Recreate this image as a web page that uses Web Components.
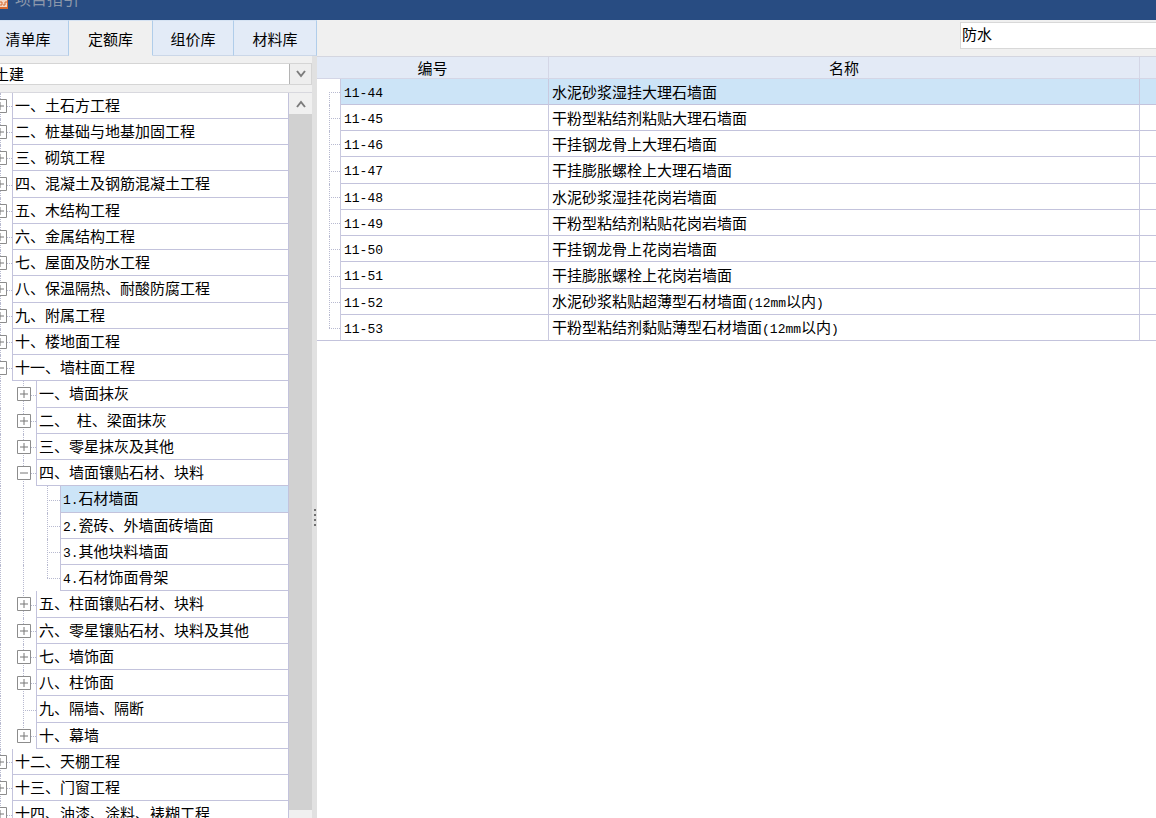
<!DOCTYPE html>
<html lang="zh-CN">
<head>
<meta charset="utf-8">
<title>项目指引</title>
<style>
html, body { margin: 0; height: 100%; overflow: hidden; }
body { font: 15px/20px "Noto Sans CJK SC", sans-serif; color: #000; background: #fff; }
</style>
</head>
<body>
<quota-window></quota-window>
<script>
const define = (name, html, setup) => customElements.define(name, class extends HTMLElement {
  connectedCallback() {
    if (this.shadowRoot) return;
    const root = this.attachShadow({ mode: 'open' });
    const tpl = document.createElement('template');
    tpl.innerHTML = html;
    root.append(tpl.content.cloneNode(true));
    if (setup) setup(this, root);
  }
});

// Half-width characters are set in a smaller monospaced face beside the full-width ones.
const mixed = text => text.replace(/[ -~]+/g, '<half-width>$&</half-width>');

define('half-width', `<style>
:host { display: inline; font: 13px/18px "Liberation Mono", monospace; }
</style><slot></slot>`);

define('title-bar', `<style>
:host { display: flex; height: 20px; background: #284c82; color: #8b97ab; overflow: hidden; font-size: 16px; }
svg { flex: none; width: 8px; height: 20px; margin-right: 7px; }
span { margin-top: -12px; white-space: nowrap; }
</style>
<svg viewBox="0 0 8 20"><path d="M0 0h8v9H0z" fill="#d9692f"/><path d="M0 0h7v7H0z" fill="#f3d9c8"/><path d="M0 2h2v3H0M3 5h2V2h2" stroke="#d9692f" fill="none"/></svg>
<span><slot></slot></span>`);

define('tab-button', `<style>
:host { display: block; }
button { box-sizing: border-box; height: 36px; width: 100%; border: 0; border-right: 1px solid #b0cdea; border-top: 1px solid #d5e2f2; border-bottom: 1px solid #cbd7e8; background: #e3ebf7; font: inherit; color: inherit; padding: 2px 0 0; }
:host([selected]) button { background: #f0f0f0; border-bottom-color: #f0f0f0; }
:host([first]) button { padding-right: 12px; }
</style><button type="button"><slot></slot></button>`);

define('plus-box', `<style>
:host { display: block; width: 14px; height: 14px; }
svg { display: block; }
</style><svg width="14" height="14"><path d="M.5.5h13v13H.5z" fill="#fff" stroke="#8c8c8c"/><path class="h" d="M3 7h8" stroke="#777"/><path class="v" d="M7 3v8" stroke="#777"/></svg>`,
(host, root) => { if (host.hasAttribute('open')) root.querySelector('.v').remove(); });

define('tree-row', `<style>
:host { display: flex; height: 26px; }
:host(:nth-child(4n)) { height: 27px; }
.guide { flex: none; box-sizing: border-box; width: 24px; position: relative; }
.root { width: 12px; }
.guide::before { content: ""; position: absolute; left: 11px; top: 0; bottom: 0; border-left: 1px dotted #b8bad0; }
.root::before { left: 0; }
.last::before { bottom: 50%; }
.branch::after { content: ""; position: absolute; left: 11px; right: 0; top: 50%; border-top: 1px dotted #b8bad0; }
.root.branch::after { left: 0; }
plus-box { position: absolute; z-index: 1; left: 5px; top: 6px; }
.root plus-box { left: -7px; }
.label { flex: 1; box-sizing: border-box; min-width: 0; border-left: 1px solid #c3c3dc; border-bottom: 1px solid #c3c3dc; padding: 2px 0 0 2px; white-space: pre; overflow: hidden; }
:host([selected]) .label { background: #cce4f7; }
</style><div class="label"><slot></slot></div>`,
(host, root) => {
  const level = +host.getAttribute('level'), label = root.querySelector('.label');
  for (let i = 0; i <= level; i++) {
    const g = document.createElement('div');
    g.className = 'guide' + (i ? '' : ' root');
    if (i === level) {
      g.classList.add('branch');
      if (host.hasAttribute('last')) g.classList.add('last');
      const s = host.getAttribute('state');
      if (s !== 'leaf') { const p = document.createElement('plus-box'); if (s === 'open') p.setAttribute('open', ''); g.append(p); }
    }
    label.before(g);
  }
});

define('tree-view', `<style>
:host { display: flex; flex: 1; min-height: 0; overflow: hidden; border-top: 1px solid #d8d8de; background: #fff; }
.rows { flex: 1; min-width: 0; border-right: 1px solid #c3c3dc; }
.bar { width: 23px; display: flex; flex-direction: column; background: #d1d1d1; }
button { height: 21px; border: 0; padding: 0; background: #f0f0f0; }
button.end { height: 8px; }
.thumb { flex: 1; }
svg { display: block; margin: 0 auto; }
</style><div class="rows"></div>
<div class="bar"><button type="button" aria-label="向上滚动"><svg width="12" height="12"><path d="M2 9l4-5 4 5" fill="none" stroke="#7c7c7c" stroke-width="2"/></svg></button><div class="thumb"></div><button class="end" type="button" aria-label="向下滚动"></button></div>`,
(host, root) => {
  const data = [
    [0,'一、土石方工程'],[0,'二、桩基础与地基加固工程'],[0,'三、砌筑工程'],[0,'四、混凝土及钢筋混凝土工程'],[0,'五、木结构工程'],[0,'六、金属结构工程'],[0,'七、屋面及防水工程'],[0,'八、保温隔热、耐酸防腐工程'],[0,'九、附属工程'],[0,'十、楼地面工程'],[0,'十一、墙柱面工程','open'],
    [1,'一、墙面抹灰'],[1,'二、 柱、梁面抹灰'],[1,'三、零星抹灰及其他'],[1,'四、墙面镶贴石材、块料','open'],
    [2,'1.石材墙面','leaf','selected'],[2,'2.瓷砖、外墙面砖墙面','leaf'],[2,'3.其他块料墙面','leaf'],[2,'4.石材饰面骨架','leaf','last'],
    [1,'五、柱面镶贴石材、块料'],[1,'六、零星镶贴石材、块料及其他'],[1,'七、墙饰面'],[1,'八、柱饰面'],[1,'九、隔墙、隔断','leaf'],[1,'十、幕墙','closed','last'],
    [0,'十二、天棚工程'],[0,'十三、门窗工程'],[0,'十四、油漆、涂料、裱糊工程']
  ];
  root.querySelector('.rows').append(...data.map(([level, text, state = 'closed', flag]) => {
    const r = document.createElement('tree-row');
    r.setAttribute('level', level); r.setAttribute('state', state);
    if (flag) r.setAttribute(flag, '');
    r.innerHTML = mixed(text);
    return r;
  }));
});

define('library-select', `<style>
:host { display: grid; grid-template-columns: 1fr 22px; height: 22px; margin: 7px 0; border: 1px solid #d5d5d5; border-left: 0; box-sizing: border-box; background: #fff; overflow: hidden; }
select { grid-area: 1 / 1 / 2 / 3; appearance: none; border: 0; margin: 0 0 0 -6px; padding: 0; background: none; font: inherit; color: inherit; outline: 0; }
.arrow { grid-area: 1 / 2; background: #eee; border-left: 1px solid #b4b4b4; pointer-events: none; display: grid; place-items: center; }
</style><select aria-label="专业"><option>土建</option></select>
<div class="arrow"><svg width="12" height="12"><path d="M2 3l4 5 4-5" fill="none" stroke="#7c7c7c" stroke-width="2"/></svg></div>`);

define('search-box', `<style>
:host { display: block; }
input { box-sizing: border-box; display: block; width: 100%; height: 27px; margin-top: 2px; border: 1px solid #d8d8d8; border-right: 0; border-radius: 0; padding: 0 0 4px 1px; font: inherit; color: inherit; background: #fff; outline: 0; }
</style><input type="text" value="防水" aria-label="搜索">`);

define('quota-table', `<style>
:host { display: block; min-width: 0; overflow: hidden; background: #fff; }
table { width: 100%; table-layout: fixed; border-collapse: separate; border-spacing: 0; }
col.tree { width: 24px; } col.code { width: 208px; } col.more { width: 16px; }
th, td { box-sizing: border-box; padding: 0 0 0 3px; border-right: 1px solid #c9c9df; border-bottom: 1px solid #c3c3dc; font-weight: normal; text-align: left; height: 26px; line-height: 20px; white-space: nowrap; }
th { height: 22px; line-height: 18px; background: #e3eaf6; text-align: center; border-color: #d4d6e6; padding: 1px 0 0; }
tbody tr:nth-child(4n) td { height: 27px; }
th:last-child, td:last-child { border-right: 0; }
.guide { position: relative; }
tr:not(:last-child) .guide { border-bottom: 0; }
.guide::before { content: ""; position: absolute; left: 12px; top: 0; bottom: 0; border-left: 1px dotted #b8bad0; }
.guide::after { content: ""; position: absolute; left: 12px; right: 0; top: 50%; border-top: 1px dotted #b8bad0; }
tr:first-child .guide::before { top: 50%; }
tr:last-child .guide::before { bottom: 50%; }
.selected td:not(.guide) { background: #cce4f7; }
</style><table><colgroup><col class="tree"><col class="code"><col><col class="more"></colgroup>
<thead><tr><th colspan="2" scope="col">编号</th><th scope="col">名称</th><th></th></tr></thead><tbody></tbody></table>`,
(host, root) => {
  const names = ['水泥砂浆湿挂大理石墙面','干粉型粘结剂粘贴大理石墙面','干挂钢龙骨上大理石墙面','干挂膨胀螺栓上大理石墙面','水泥砂浆湿挂花岗岩墙面','干粉型粘结剂粘贴花岗岩墙面','干挂钢龙骨上花岗岩墙面','干挂膨胀螺栓上花岗岩墙面','水泥砂浆粘贴超薄型石材墙面(12mm以内)','干粉型粘结剂黏贴薄型石材墙面(12mm以内)'];
  root.querySelector('tbody').innerHTML = names.map((n, i) => `<tr${i ? '' : ' class="selected"'}><td class="guide"></td><td>${mixed('11-' + (44 + i))}</td><td>${mixed(n)}</td><td></td></tr>`).join('');
});

define('pane-splitter', `<style>
:host { display: grid; place-items: center; background: #e1e1e1; padding-top: 162px; box-sizing: border-box; }
svg { display: block; }
</style><svg width="4" height="18"><path d="M1 0h2v2H1zM1 5h2v2H1zM1 10h2v2H1zM1 15h2v2H1z" fill="#707070"/></svg>`);

define('quota-window', `<style>
:host { display: flex; flex-direction: column; height: 100vh; }
.tools { display: grid; grid-template-columns: 69px 84px 81px 83px 1fr 196px; height: 36px; background: #f0f0f0; }
search-box { grid-column: 6; }
.work { flex: 1; min-height: 0; display: grid; grid-template-columns: 312px 5px 1fr; }
.left { display: flex; flex-direction: column; min-height: 0; background: #f0f0f0; }
quota-table { border-top: 1px solid #d4d6e0; }
</style>
<title-bar>项目指引</title-bar>
<div class="tools"><tab-button first>清单库</tab-button><tab-button selected>定额库</tab-button><tab-button>组价库</tab-button><tab-button>材料库</tab-button><search-box></search-box></div>
<div class="work"><div class="left"><library-select></library-select><tree-view></tree-view></div><pane-splitter></pane-splitter><quota-table></quota-table></div>`);
</script>
</body>
</html>
